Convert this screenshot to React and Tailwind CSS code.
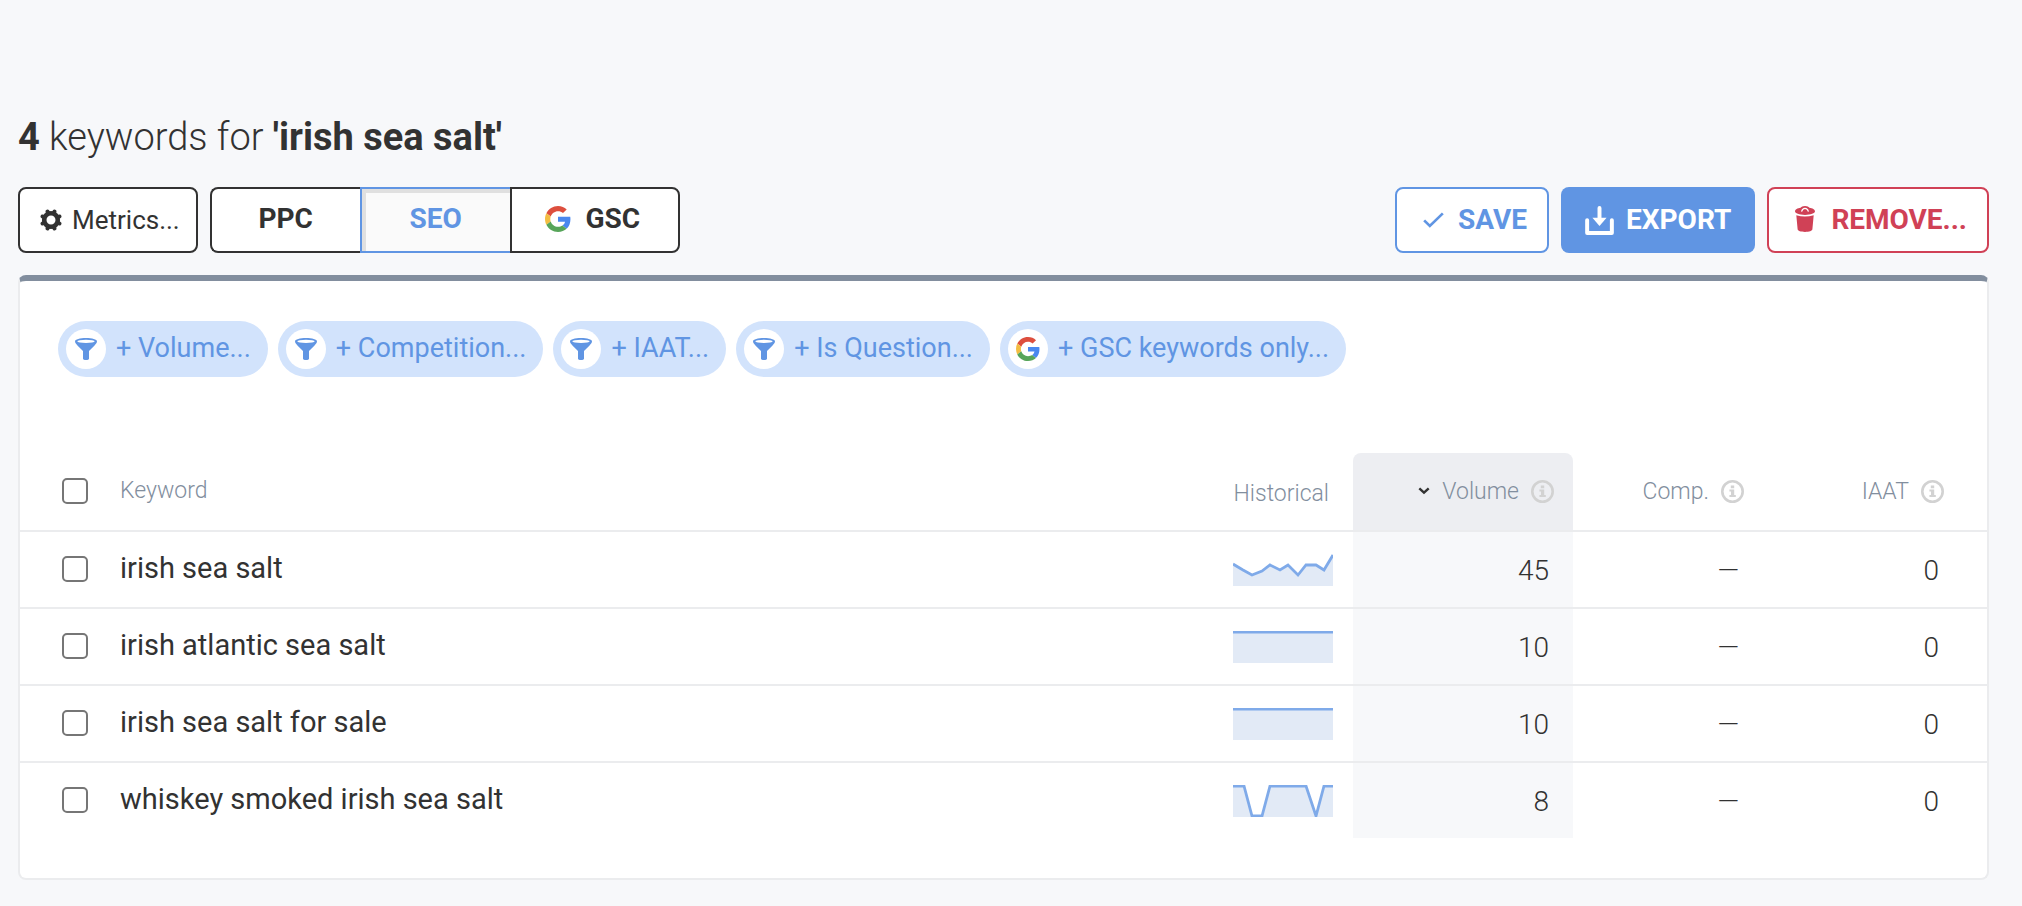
import React from "react";

function GearIcon() {
  return (
    <svg viewBox="0 0 22 22" className="size-[22px] shrink-0" aria-hidden="true">
      <circle cx="11" cy="11" r="6.8" fill="none" stroke="#323232" strokeWidth="4.6" />
      {[22.5, 67.5, 112.5, 157.5, 202.5, 247.5, 292.5, 337.5].map((angle) => (
        <path
          key={angle}
          d="M8.600 3.6 9.200 1Q9.400-.2 11-.2T12.800 1L13.400 3.6Z"
          fill="#323232"
          transform={`rotate(${angle} 11 11)`}
        />
      ))}
    </svg>
  );
}

function GoogleIcon({ className }) {
  return (
    <svg viewBox="0 0 48 48" className={className} aria-hidden="true">
      <path fill="#dd4f3e" d="M24 9.5c3.54 0 6.71 1.22 9.21 3.6l6.85-6.85C35.9 2.38 30.47 0 24 0 14.62 0 6.51 5.38 2.56 13.22l7.98 6.19C12.43 13.72 17.74 9.5 24 9.5z" />
      <path fill="#4a88ef" d="M46.98 24.55c0-1.57-.15-3.09-.38-4.55H24v9.02h12.94c-.58 2.96-2.26 5.48-4.78 7.18l7.73 6c4.51-4.18 7.09-10.36 7.09-17.65z" />
      <path fill="#f3bd42" d="M10.53 28.59c-.48-1.45-.76-2.99-.76-4.59s.27-3.14.76-4.59l-7.98-6.19C.92 16.46 0 20.12 0 24c0 3.88.92 7.54 2.56 10.78l7.97-6.19z" />
      <path fill="#57a55a" d="M24 48c6.48 0 11.93-2.13 15.89-5.81l-7.73-6c-2.15 1.45-4.92 2.3-8.16 2.3-6.26 0-11.57-4.22-13.47-9.91l-7.98 6.19C6.51 42.62 14.62 48 24 48z" />
    </svg>
  );
}

function FunnelIcon() {
  return (
    <svg viewBox="0 0 66 66" className="size-[22px]" aria-hidden="true">
      <path fill="#6095e3" d="M0 10C0 4 15 0 33 0s33 4 33 10c0 5-4 9-8 13L42 39v23c0 5-18 5-18 0V39L8 23C4 19 0 15 0 10z" />
      <ellipse cx="33" cy="10" rx="26" ry="5" fill="#fff" />
    </svg>
  );
}

function CheckIcon() {
  return (
    <svg viewBox="0 0 62 48" className="h-4 w-[21px]" aria-hidden="true">
      <path d="M3 25 20 42 59 4" fill="none" stroke="#6095e3" strokeWidth="8" />
    </svg>
  );
}

function ExportIcon() {
  return (
    <svg viewBox="0 0 87 88" className="size-[29px]" aria-hidden="true">
      <path d="M6 43v39h75V43" fill="none" stroke="#fff" strokeWidth="12" strokeLinecap="round" strokeLinejoin="round" />
      <path d="M43.500 6v36" stroke="#fff" strokeWidth="12" strokeLinecap="round" />
      <path d="M22 36h43L43.500 61z" fill="#fff" />
    </svg>
  );
}

function TrashIcon() {
  return (
    <svg viewBox="0 0 61 79" className="mb-0.5 h-[26px] w-5" aria-hidden="true">
      <path fill="#d04156" d="M0 16C0 10 8 6 17 5 21 3 22 0 30.500 0S40 3 44 5c9 1 17 5 17 11s-13 11-30.500 11S0 22 0 16z" />
      <path d="M20 17c2-8 6-10 10.500-10S39 9 41 17" fill="none" stroke="#fff" strokeWidth="3.500" />
      <path fill="#d04156" d="M4 28q26 8 53 0L53 71c0 5-10 8-22.500 8S8 76 8 71z" />
    </svg>
  );
}

function InfoIcon() {
  return (
    <svg viewBox="0 0 23 23" className="size-[23px] shrink-0" role="img" aria-label="More information">
      <circle cx="11.500" cy="11.500" r="10.200" fill="none" stroke="#d2d2d2" strokeWidth="2.600" />
      <path fill="#d2d2d2" d="M9.800 5.400h3.400v2.800H9.800zM8.400 9.400h4.800v5.600h1.600v2H8.400v-2H10v-3.600H8.400z" />
    </svg>
  );
}

function ChevronIcon() {
  return (
    <svg viewBox="0 0 12 8" className="mb-0.5 h-2 w-3" aria-hidden="true">
      <path d="M1.300 1.400 6 5.700l4.700-4.300" fill="none" stroke="#323232" strokeWidth="2.400" />
    </svg>
  );
}

const TREND_WIDTH = 100;
const TREND_HEIGHT = 32;

function Trend({ points }) {
  const line = points.map(([x, y]) => `${x},${y}`).join(" ");
  return (
    <svg viewBox={`0 0 ${TREND_WIDTH} ${TREND_HEIGHT}`} className="block h-8 w-[100px]" role="img" aria-label="Search volume history">
      <polygon points={`0,${TREND_HEIGHT} ${line} ${TREND_WIDTH},${TREND_HEIGHT}`} fill="#e2eaf6" />
      <polyline points={line} fill="none" stroke="#7faae9" strokeWidth="2.800" />
    </svg>
  );
}

const FLAT = [[0, 1], [100, 1]];

const ROWS = [
  {
    keyword: "irish sea salt",
    volume: 45,
    trend: [[0, 10], [10, 16], [19, 21], [29, 17], [37, 11], [47, 16], [55, 11], [65, 21], [73, 11], [83, 11], [91, 16], [100, 1]],
  },
  { keyword: "irish atlantic sea salt", volume: 10, trend: FLAT },
  { keyword: "irish sea salt for sale", volume: 10, trend: FLAT },
  {
    keyword: "whiskey smoked irish sea salt",
    volume: 8,
    trend: [[0, 1], [11, 1], [19, 31], [29, 31], [37, 1], [73, 1], [83, 31], [91, 1], [100, 1]],
  },
];

const FILTERS = ["Volume", "Competition", "IAAT", "Is Question"];

function Chip({ icon, children }) {
  return (
    <button type="button" className="flex h-14 items-center gap-2.5 rounded-full bg-[#d2e3fc] pr-[17px] pl-2 text-[27px] leading-8 text-[#6095e3]">
      <span className="flex size-10 items-center justify-center rounded-full bg-white">{icon}</span>
      <span className="pb-0.5">{children}</span>
    </button>
  );
}

function Checkbox({ label }) {
  return (
    <input
      type="checkbox"
      aria-label={label}
      className="block size-[26px] appearance-none rounded-[5px] border-2 border-[#767676] bg-white checked:bg-[#6095e3]"
    />
  );
}

export default function App() {
  return (
    <main className="min-h-screen bg-[#f7f8fa] pt-[115px] pr-[33px] pb-[26px] pl-[18px] font-['Roboto',sans-serif] text-[#323232]">
      <h1 className="text-[38px] leading-[44px] font-light">
        <b className="font-bold">4</b> keywords for <b className="font-bold">'irish sea salt'</b>
      </h1>

      <div className="mt-7 flex flex-wrap items-stretch justify-between gap-3 text-[28px] leading-8">
        <div className="flex gap-3">
          <button type="button" className="flex h-[66px] items-center gap-2.5 rounded-lg border-2 border-[#323232] bg-white pr-4 pl-5 text-[26px]">
            <GearIcon />
            Metrics...
          </button>
          <div className="flex h-[66px] font-bold" role="group" aria-label="Data source">
            <button type="button" className="w-[150px] rounded-l-lg border-2 border-r-0 border-[#323232] bg-white pb-0.5">
              PPC
            </button>
            <button type="button" aria-pressed="true" className="w-[150px] border-2 border-r-0 border-[#6095e3] bg-[#fafafa] pb-0.5 text-[#6095e3] shadow-[inset_4px_4px_0_#e0e0e0]">
              SEO
            </button>
            <button type="button" className="flex w-[170px] items-center justify-center gap-3.5 rounded-r-lg border-2 border-[#323232] bg-white pr-1 pb-0.5">
              <GoogleIcon className="size-[26px]" />
              GSC
            </button>
          </div>
        </div>
        <div className="flex gap-3 font-bold">
          <button type="button" className="flex h-[66px] items-center gap-3.5 rounded-lg border-2 border-[#6095e3] bg-white pr-5 pl-[26px] text-[#6095e3]">
            <CheckIcon />
            SAVE
          </button>
          <button type="button" className="flex h-[66px] items-center gap-3 rounded-lg bg-[#6095e3] px-6 text-white">
            <ExportIcon />
            EXPORT
          </button>
          <button type="button" className="flex h-[66px] items-center gap-4 rounded-lg border-2 border-[#d04156] bg-white pr-5 pl-[26px] text-[#d04156]">
            <TrashIcon />
            REMOVE...
          </button>
        </div>
      </div>

      <section className="mt-[22px] rounded-lg border-2 border-t-[6px] border-[#ebecee] border-t-[#828e9e] bg-white pt-10 pb-10">
        <div className="flex flex-wrap gap-2.5 px-[38px]">
          {FILTERS.map((name) => (
            <Chip key={name} icon={<FunnelIcon />}>
              + {name}...
            </Chip>
          ))}
          <Chip icon={<GoogleIcon className="size-6" />}>+ GSC keywords only...</Chip>
        </div>

        <table className="mt-[76px] w-full table-fixed border-separate border-spacing-0">
          <colgroup>
            <col className="w-[100px]" />
            <col />
            <col className="w-[160px]" />
            <col className="w-[220px]" />
            <col className="w-[190px]" />
            <col className="w-[224px]" />
          </colgroup>
          <thead className="text-[23px] leading-8 text-[#828e9e]">
            <tr className="h-[79px] *:border-b-2 *:border-[#ebecee] *:p-0 *:font-light">
              <th className="text-left">
                <div className="pb-0.5 pl-[42px]">
                  <Checkbox label="Select all keywords" />
                </div>
              </th>
              <th className="text-left">
                <div className="pb-0.5">Keyword</div>
              </th>
              <th className="text-right">
                <div className="pt-1 pr-6">Historical</div>
              </th>
              <th className="rounded-t-lg bg-[#edeef2]" aria-sort="descending">
                <div className="flex items-center justify-end gap-3 pr-[19px]">
                  <ChevronIcon />
                  Volume
                  <InfoIcon />
                </div>
              </th>
              <th>
                <div className="flex items-center justify-end gap-3 pr-[19px]">
                  Comp.
                  <InfoIcon />
                </div>
              </th>
              <th>
                <div className="flex items-center justify-end gap-3 pr-[43px]">
                  IAAT
                  <InfoIcon />
                </div>
              </th>
            </tr>
          </thead>
          <tbody className="text-[28px] leading-9">
            {ROWS.map((row) => (
              <tr key={row.keyword} className="h-[77px] *:border-b-2 *:border-[#ebecee] last:h-[75px] last:*:border-b-0">
                <td className="pb-0.5 pl-[42px]">
                  <Checkbox label={`Select ${row.keyword}`} />
                </td>
                <td className="pb-1 text-[29px]">{row.keyword}</td>
                <td>
                  <div className="flex justify-end pr-5">
                    <Trend points={row.trend} />
                  </div>
                </td>
                <td className="bg-[#f7f8fa] pt-0.5 pr-6 text-right font-light">{row.volume}</td>
                <td className="pt-0.5 pr-6 text-right font-light">—</td>
                <td className="pt-0.5 pr-12 text-right font-light">0</td>
              </tr>
            ))}
          </tbody>
        </table>
      </section>
    </main>
  );
}
